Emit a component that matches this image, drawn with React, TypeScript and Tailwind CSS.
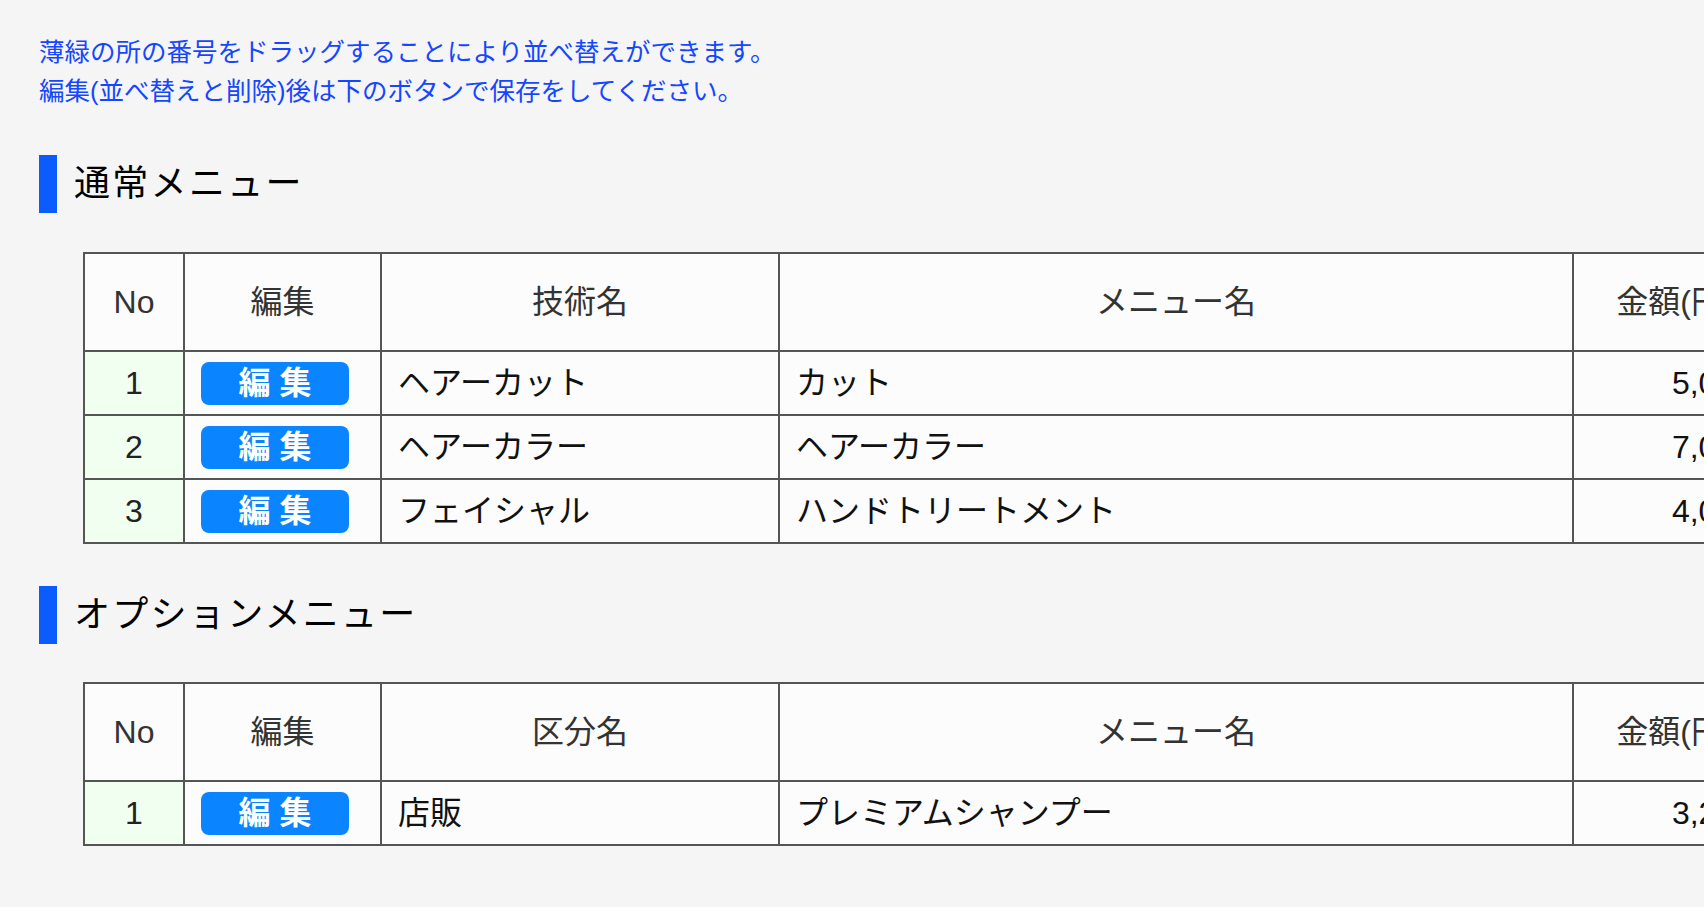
const font = "font-['Liberation_Sans','Noto_Sans_CJK_JP',sans-serif]";

type Row = { no: number; category: string; menu: string; price: string };

const normalRows: Row[] = [
  { no: 1, category: "ヘアーカット", menu: "カット", price: "5,000" },
  { no: 2, category: "ヘアーカラー", menu: "ヘアーカラー", price: "7,000" },
  { no: 3, category: "フェイシャル", menu: "ハンドトリートメント", price: "4,000" },
];

const optionRows: Row[] = [
  { no: 1, category: "店販", menu: "プレミアムシャンプー", price: "3,200" },
];

function SectionTitle({ title }: { title: string }) {
  return (
    <div className="flex items-center h-[58px]">
      <div className="w-[18px] h-[58px] bg-[#0a5cff]" />
      <h2 className="ml-[17px] text-[36px] leading-none text-black tracking-[2.3px]">{title}</h2>
    </div>
  );
}

function MenuTable({ label, rows }: { label: string; rows: Row[] }) {
  const th = "border-2 border-[#555] bg-[#fcfcfc] font-normal text-[#333] text-[32px] h-[98px]";
  const td = "border-2 border-[#555] bg-[#fcfcfc] text-[32px] text-[#111] h-[64px]";
  return (
    <table className="ml-[44px] border-collapse table-fixed w-[1900px]">
      <colgroup>
        <col className="w-[100px]" />
        <col className="w-[197px]" />
        <col className="w-[398px]" />
        <col className="w-[794px]" />
        <col className="w-[204px]" />
        <col />
      </colgroup>
      <thead>
        <tr>
          <th className={th}>No</th>
          <th className={th}>編集</th>
          <th className={th}>{label}</th>
          <th className={th}>メニュー名</th>
          <th className={th}>金額(円)</th>
          <th className={th}>削除</th>
        </tr>
      </thead>
      <tbody>
        {rows.map((r) => (
          <tr key={r.no}>
            <td className={`${td} !bg-[#f0fff0] text-center text-[#222]`}>{r.no}</td>
            <td className={`${td} px-[16px]`}>
              <button className="w-[148px] h-[43px] rounded-[8px] bg-[#0a84ff] text-white font-bold text-[32px] leading-none tracking-[9px] pl-[9px]">
                編集
              </button>
            </td>
            <td className={`${td} px-[16px]`}>{r.category}</td>
            <td className={`${td} px-[16px]`}>{r.menu}</td>
            <td className={`${td} px-[24px] text-right`}>{r.price}</td>
            <td className={`${td} text-center`} />
          </tr>
        ))}
      </tbody>
    </table>
  );
}

export default function App() {
  return (
    <div className={`${font} bg-[#f5f5f5] w-full h-[907px] overflow-hidden`}>
      <div className="pl-[39px] pt-[33px]">
        <p className="text-[25.5px] leading-[39px] text-[#1447ff]">
          薄緑の所の番号をドラッグすることにより並べ替えができます。
          <br />
          編集(並べ替えと削除)後は下のボタンで保存をしてください。
        </p>
        <div className="mt-[44px]">
          <SectionTitle title="通常メニュー" />
        </div>
        <div className="mt-[39px]">
          <MenuTable label="技術名" rows={normalRows} />
        </div>
        <div className="mt-[42px]">
          <SectionTitle title="オプションメニュー" />
        </div>
        <div className="mt-[38px]">
          <MenuTable label="区分名" rows={optionRows} />
        </div>
      </div>
    </div>
  );
}
